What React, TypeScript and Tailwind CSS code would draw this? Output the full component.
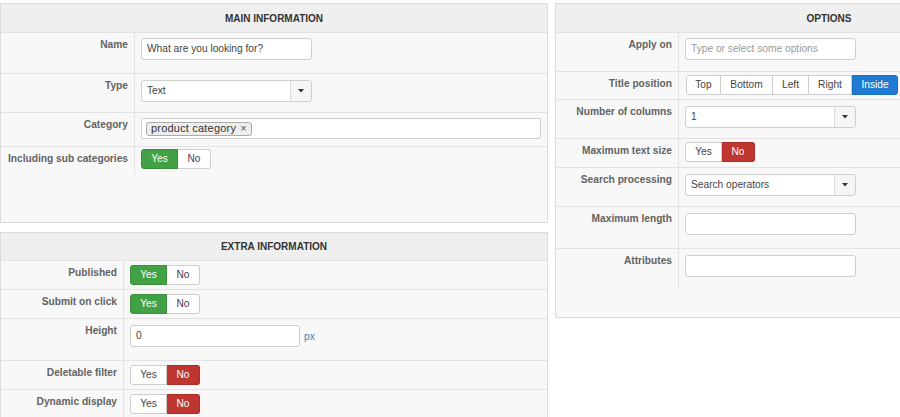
import type { ReactNode } from 'react';

const font = { fontFamily: '"Liberation Sans", Arial, sans-serif' };

function Panel({ title, headerH, children, className = '' }: { title: string; headerH: string; children: ReactNode; className?: string }) {
  return (
    <div className={`border border-[#dcdcdc] bg-[#f8f8f8] flex flex-col ${className}`}>
      <div className={`${headerH} bg-[#efefef] flex items-center justify-center text-[10px] font-bold text-[#333] shrink-0`}>
        {title}
      </div>
      {children}
    </div>
  );
}

function Row({ label, labelW, h, pt, children }: { label: string; labelW: string; h: string; pt: string; children?: ReactNode }) {
  return (
    <div className={`flex border-t border-[#e3e3e3] ${h} shrink-0`}>
      <div className={`${labelW} shrink-0 border-r border-[#e3e3e3] text-right pr-[6px] pt-[4px] leading-[16px] text-[10.2px] font-bold text-[#636363] whitespace-nowrap`}>
        {label}
      </div>
      <div className={`flex-1 pl-[6px] pr-[6px] ${pt} flex items-start`}>{children}</div>
    </div>
  );
}

function TextInput({ value, placeholder, w = 'w-[171px]' }: { value?: string; placeholder?: string; w?: string }) {
  return (
    <div className={`${w} h-[22px] bg-white border border-[#cfcfcf] rounded-[3px] flex items-center px-[5px] text-[10.2px] ${value ? 'text-[#444]' : 'text-[#999]'}`}>
      {value ?? placeholder}
    </div>
  );
}

function Select({ value }: { value: string }) {
  return (
    <div className="w-[171px] h-[22px] bg-white border border-[#cfcfcf] rounded-[3px] flex items-stretch text-[10.2px] text-[#444]">
      <div className="flex-1 flex items-center px-[5px]">{value}</div>
      <div className="w-[21px] border-l border-[#dcdcdc] bg-[#f5f5f5] rounded-r-[3px] flex items-center justify-center">
        <svg width="6" height="4" viewBox="0 0 6 4"><path d="M0 0h6L3 3.5z" fill="#333" /></svg>
      </div>
    </div>
  );
}

function YesNo({ yes }: { yes: boolean }) {
  return (
    <div className="flex h-[20px] text-[10.2px]">
      <div className={`w-[37px] flex items-center justify-center rounded-l-[3px] border ${yes ? 'bg-[#42a145] border-[#3a8f3d] text-white' : 'bg-white border-[#cdcdcd] text-[#444]'}`}>Yes</div>
      <div className={`w-[33px] flex items-center justify-center rounded-r-[3px] border border-l-0 ${yes ? 'bg-white border-[#cdcdcd] text-[#4a3a5a]' : 'bg-[#bf3530] border-[#a82e2a] text-white'}`}>No</div>
    </div>
  );
}

function TitlePosition() {
  const items = [
    { t: 'Top', w: 'w-[35px]' },
    { t: 'Bottom', w: 'w-[52px]' },
    { t: 'Left', w: 'w-[36px]' },
    { t: 'Right', w: 'w-[43px]' },
  ];
  return (
    <div className="flex h-[20px] text-[10.2px] ml-[1px]">
      {items.map((it, i) => (
        <div key={it.t} className={`${it.w} flex items-center justify-center bg-white border border-[#cdcdcd] text-[#444] ${i === 0 ? 'rounded-l-[3px]' : 'border-l-0'}`}>{it.t}</div>
      ))}
      <div className="w-[46px] flex items-center justify-center bg-[#1f7bd1] border border-[#1b6fbe] text-white rounded-r-[3px]">Inside</div>
    </div>
  );
}

export default function App() {
  return (
    <div className="w-[900px] h-[417px] overflow-hidden bg-white" style={font}>
      <div className="w-[1103px] pt-[3px] flex items-start gap-[7px]">
        <div className="w-[548px] shrink-0 flex flex-col gap-[9px]">
          <Panel title="MAIN INFORMATION" headerH="h-[28px]" className="h-[220px]">
            <Row label="Name" labelW="w-[134px]" h="h-[41px]" pt="pt-[5px]">
              <TextInput value="What are you looking for?" />
            </Row>
            <Row label="Type" labelW="w-[134px]" h="h-[39px]" pt="pt-[6px]">
              <Select value="Text" />
            </Row>
            <Row label="Category" labelW="w-[134px]" h="h-[34px]" pt="pt-[5px]">
              <div className="flex-1 h-[21px] bg-white border border-[#cfcfcf] rounded-[2px] flex items-center px-[4px]">
                <div className="h-[14px] flex items-center gap-[4px] px-[4px] bg-[#eeeeee] border border-[#aaaaaa] rounded-[3px] text-[11px] text-[#333] tracking-[0.2px]">
                  product category
                  <span className="text-[11px] leading-none text-[#555]">×</span>
                </div>
              </div>
            </Row>
            <Row label="Including sub categories" labelW="w-[134px]" h="h-[28px]" pt="pt-[2px]">
              <YesNo yes />
            </Row>
          </Panel>
          <Panel title="EXTRA INFORMATION" headerH="h-[27px]" className="h-[200px]">
            <Row label="Published" labelW="w-[123px]" h="h-[29px]" pt="pt-[4px]">
              <YesNo yes />
            </Row>
            <Row label="Submit on click" labelW="w-[123px]" h="h-[29px]" pt="pt-[4px]">
              <YesNo yes />
            </Row>
            <Row label="Height" labelW="w-[123px]" h="h-[42px]" pt="pt-[6px]">
              <TextInput value="0" w="w-[170px]" />
              <span className="ml-[4px] mt-[4px] text-[10.2px] text-[#4a7bb3]">px</span>
            </Row>
            <Row label="Deletable filter" labelW="w-[123px]" h="h-[29px]" pt="pt-[4px]">
              <YesNo yes={false} />
            </Row>
            <Row label="Dynamic display" labelW="w-[123px]" h="h-[29px]" pt="pt-[4px]">
              <YesNo yes={false} />
            </Row>
          </Panel>
        </div>
        <Panel title="OPTIONS" headerH="h-[28px]" className="w-[548px] shrink-0 h-[315px]">
          <Row label="Apply on" labelW="w-[123px]" h="h-[39px]" pt="pt-[5px]">
            <TextInput placeholder="Type or select some options" />
          </Row>
          <Row label="Title position" labelW="w-[123px]" h="h-[28px]" pt="pt-[3px]">
            <TitlePosition />
          </Row>
          <Row label="Number of columns" labelW="w-[123px]" h="h-[39px]" pt="pt-[6px]">
            <Select value="1" />
          </Row>
          <Row label="Maximum text size" labelW="w-[123px]" h="h-[29px]" pt="pt-[3px]">
            <YesNo yes={false} />
          </Row>
          <Row label="Search processing" labelW="w-[123px]" h="h-[39px]" pt="pt-[6px]">
            <Select value="Search operators" />
          </Row>
          <Row label="Maximum length" labelW="w-[123px]" h="h-[42px]" pt="pt-[6px]">
            <TextInput />
          </Row>
          <Row label="Attributes" labelW="w-[123px]" h="h-[42px]" pt="pt-[6px]">
            <TextInput />
          </Row>
        </Panel>
      </div>
    </div>
  );
}
